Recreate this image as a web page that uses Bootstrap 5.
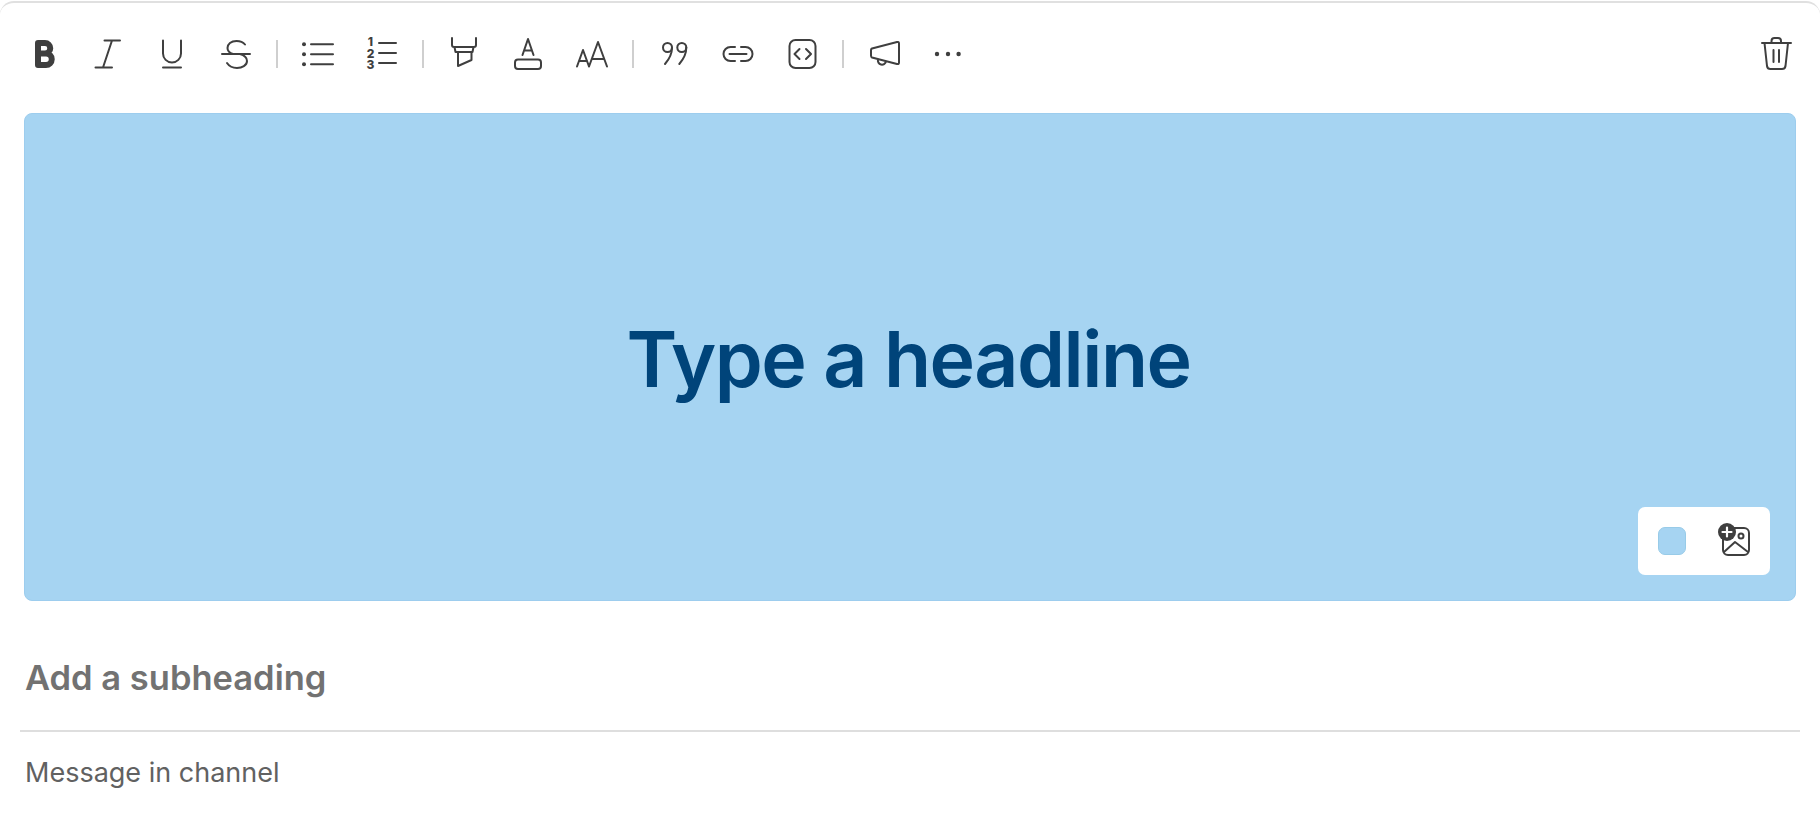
<!DOCTYPE html>
<html lang="en">
<head>
    <meta charset="UTF-8">
    <meta name="viewport" content="width=device-width, initial-scale=1.0">
    <title>Message composer</title>
    <link rel="stylesheet" href="https://cdn.jsdelivr.net/npm/bootstrap@5.3.0/dist/css/bootstrap.min.css">
    <style>
        body {
            font-family: "Inter", "Liberation Sans", sans-serif;
            background-color: #fff;
            overflow: hidden;
        }

        .composer {
            margin-top: 1px;
            border-top: 2px solid #e0e0e0;
            border-radius: 14px 14px 0 0;
        }

        .tool-row {
            padding: 31px 12px 39px;
        }

        .tool-btn {
            width: 64px;
            height: 40px;
            padding: 0;
            border: 0;
            border-radius: 0;
        }

        .tool-btn svg {
            width: 40px;
            height: 40px;
            fill: none;
            stroke: #3f3f3f;
            stroke-width: 2;
            stroke-linecap: round;
            stroke-linejoin: round;
        }

        .tool-btn svg .solid {
            fill: #3f3f3f;
            stroke: none;
        }

        .tool-btn svg text {
            fill: #3f3f3f;
            stroke: none;
            font-family: "Inter", sans-serif;
            font-size: 12px;
            font-weight: 800;
            text-anchor: middle;
        }

        .tool-sep {
            width: 2px;
            height: 28px;
            margin: 0 8px;
            background-color: #cfcfcf;
        }

        .hero {
            height: 488px;
            margin: 0 24px;
            background-color: #a6d4f2;
            border: 1px solid #9dcdee;
            border-radius: 8px;
        }

        .hero-title {
            margin: 4px 3px 0 0;
            color: #00447a;
            font-size: 77px;
            font-weight: 600;
            letter-spacing: -1.5px;
        }

        .hero-tools {
            right: 25px;
            bottom: 25px;
            padding: 0 2px;
            height: 68px;
            background-color: #fff;
            border-radius: 7px;
        }

        .swatch {
            width: 28px;
            height: 28px;
            background-color: #a6d4f2;
            border: 1px solid #98cbe8;
            border-radius: 7px;
        }

        .sub-line {
            height: 129px;
            padding: 25px 25px 0;
            color: #727272;
            font-size: 34.500px;
            font-weight: 600;
        }

        .msg-line {
            margin: 0 20px;
            padding: 23px 5px 0;
            border-top: 2px solid #dedede;
            color: #616161;
            font-size: 27px;
            line-height: 36px;
        }
    </style>
</head>
<body>
    <div class="composer">
        <!-- Toolbar -->
        <div class="tool-row d-flex align-items-center">
            <button class="btn tool-btn" type="button" aria-label="Bold">
                <svg viewBox="0 0 40 40"><path stroke-width="6" d="M14 9h7a5 5 0 0 1 0 10.500h-7M14 19.500h8a5.700 5.700 0 0 1 0 11.500h-8M14 9v22"/></svg>
            </button>
            <button class="btn tool-btn" type="button" aria-label="Italic">
                <svg viewBox="0 0 40 40"><path d="M16.500 6.500H32M7.500 33.500H24M24 6.500L15 33.500"/></svg>
            </button>
            <button class="btn tool-btn" type="button" aria-label="Underline">
                <svg viewBox="0 0 40 40"><path d="M11 6.500v13a9 9 0 0 0 18 0v-13M11 33.500h18"/></svg>
            </button>
            <button class="btn tool-btn" type="button" aria-label="Strikethrough">
                <svg viewBox="0 0 40 40"><path d="M29 10.500C27 8 24 7 20.500 7C15 7 11.500 10 11.500 14C11.500 17 13.500 19 17 20M6 20H34M24 20C29 21.500 31 24 31 27C31 31.500 26 34 21 34C16 34 13 32 11 29"/></svg>
            </button>
            <div class="tool-sep"></div>
            <button class="btn tool-btn" type="button" aria-label="Bulleted list">
                <svg viewBox="0 0 40 40">
                    <circle class="solid" cx="6" cy="10.300" r="2"/><circle class="solid" cx="6" cy="20.300" r="2"/><circle class="solid" cx="6" cy="30.300" r="2"/>
                    <path d="M13 10.300H35M13 20.300H35M13 30.300H35"/>
                </svg>
            </button>
            <button class="btn tool-btn" type="button" aria-label="Numbered list">
                <svg viewBox="0 0 40 40">
                    <text x="8.500" y="12">1</text><text x="8.500" y="23.500">2</text><text x="8.500" y="35">3</text>
                    <path d="M17 9H34M17 19H34M17 29H34"/>
                </svg>
            </button>
            <div class="tool-sep"></div>
            <button class="btn tool-btn" type="button" aria-label="Highlight">
                <svg viewBox="0 0 40 40"><path d="M8 4V11Q8 13 10 13H30Q32 13 32 11V4M10.500 13L11.500 18H28.500L29.500 13M14 18V32L27.500 26V18"/></svg>
            </button>
            <button class="btn tool-btn" type="button" aria-label="Text colour">
                <svg viewBox="0 0 40 40"><path d="M14.500 21L20 5L25.500 21M16 16.500H24"/><rect x="7" y="25.500" width="26" height="9.500" rx="3"/></svg>
            </button>
            <button class="btn tool-btn" type="button" aria-label="Text size">
                <svg viewBox="0 0 40 40"><path d="M5 32.500L11 16L17 32.500M7 27H15M17 32.500L26 8L35 32.500M20 25H32"/></svg>
            </button>
            <div class="tool-sep"></div>
            <button class="btn tool-btn" type="button" aria-label="Quote">
                <svg viewBox="0 0 40 40">
                    <circle cx="13.500" cy="13.500" r="4.500"/><path d="M18 13.500C18 20 14.500 26 11 30"/>
                    <circle cx="27.800" cy="13.500" r="4.500"/><path d="M32.300 13.500C32.300 20 28.800 26 25.300 30"/>
                </svg>
            </button>
            <button class="btn tool-btn" type="button" aria-label="Link">
                <svg viewBox="0 0 40 40"><path d="M17 13H12.500a7 7 0 0 0 0 14H17M23 13h4.500a7 7 0 0 1 0 14H23M11.500 20H28.500"/></svg>
            </button>
            <button class="btn tool-btn" type="button" aria-label="Code">
                <svg viewBox="0 0 40 40"><rect x="7.500" y="6" width="26" height="28" rx="6"/><path d="M17.500 15L12.500 20L17.500 25M24 15L29 20L24 25"/></svg>
            </button>
            <div class="tool-sep"></div>
            <button class="btn tool-btn" type="button" aria-label="Announcement">
                <svg viewBox="0 0 40 40"><path d="M8 14.500L33 8Q35 7.500 35 9.500V28.500Q35 30.500 33 30L8 23.500Q7 23 7 21.500V16Q7 15 8 14.500ZM14 25.500a4 4 0 0 0 8 2"/></svg>
            </button>
            <button class="btn tool-btn" type="button" aria-label="More">
                <svg viewBox="0 0 40 40"><circle class="solid" cx="9" cy="20" r="2.200"/><circle class="solid" cx="20" cy="20" r="2.200"/><circle class="solid" cx="30.600" cy="20" r="2.200"/></svg>
            </button>
            <button class="btn tool-btn ms-auto" type="button" aria-label="Delete">
                <svg viewBox="0 0 40 40"><path d="M6 9H35M15.500 9V7a3 3 0 0 1 3-3h3.500a3 3 0 0 1 3 3v2M8.500 9L11 32Q11.500 35 14.500 35H26Q29 35 29.500 32L32 9M17.500 16V28M23 16V28"/></svg>
            </button>
        </div>

        <!-- Banner -->
        <div class="hero position-relative d-flex align-items-center justify-content-center">
            <h1 class="hero-title">Type a headline</h1>
            <div class="hero-tools position-absolute d-flex align-items-center">
                <button class="btn tool-btn d-flex align-items-center justify-content-center" type="button" aria-label="Background colour">
                    <span class="swatch"></span>
                </button>
                <button class="btn tool-btn" type="button" aria-label="Add image">
                    <svg viewBox="0 0 40 40">
                        <rect x="7" y="7" width="26" height="27" rx="5"/>
                        <path d="M8 31L19 21L32 31"/>
                        <circle cx="25" cy="15" r="2.500"/>
                        <circle class="solid" cx="11" cy="11" r="9"/>
                        <path stroke="#fff" stroke-width="2.200" d="M11 6.500V15.500M6.500 11H15.500"/>
                    </svg>
                </button>
            </div>
        </div>

        <div class="sub-line d-flex align-items-center">Add a subheading</div>
        <div class="msg-line">Message in channel</div>
    </div>

    <script src="https://cdn.jsdelivr.net/npm/bootstrap@5.3.0/dist/js/bootstrap.bundle.min.js"></script>
</body>
</html>
